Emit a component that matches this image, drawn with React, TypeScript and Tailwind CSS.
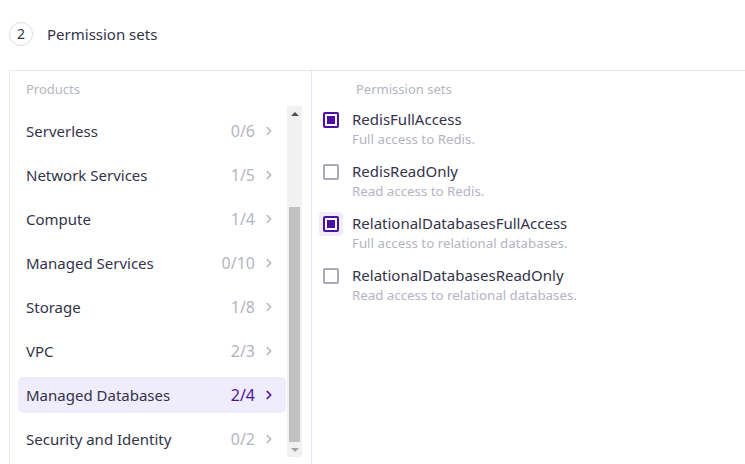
import { ChevronRight } from "lucide-react";

const products = [
  { name: "Serverless", count: "0/6" },
  { name: "Network Services", count: "1/5" },
  { name: "Compute", count: "1/4" },
  { name: "Managed Services", count: "0/10" },
  { name: "Storage", count: "1/8" },
  { name: "VPC", count: "2/3" },
  { name: "Managed Databases", count: "2/4", active: true },
  { name: "Security and Identity", count: "0/2" },
];

const sets = [
  { name: "RedisFullAccess", desc: "Full access to Redis.", checked: true },
  { name: "RedisReadOnly", desc: "Read access to Redis." },
  {
    name: "RelationalDatabasesFullAccess",
    desc: "Full access to relational databases.",
    checked: true,
    focused: true,
  },
  { name: "RelationalDatabasesReadOnly", desc: "Read access to relational databases." },
];

function Checkbox({ checked, focused }: { checked?: boolean; focused?: boolean }) {
  return (
    <div
      className={`flex h-6 w-6 shrink-0 items-center justify-center rounded-[4px] ${
        focused ? "bg-[#efecfb]" : ""
      }`}
    >
      <div
        className={`flex h-4 w-4 items-center justify-center rounded-[2px] border-2 ${
          checked ? "border-[#4f0f9e]" : "border-[#a9a9b8]"
        } bg-white`}
      >
        {checked && <div className="h-2 w-2 bg-[#4f0f9e]" />}
      </div>
    </div>
  );
}

export default function App() {
  return (
    <div className="h-[464px] overflow-hidden bg-white pl-[9px] font-['Noto_Sans',sans-serif] text-[#33334a]">
      <div className="flex h-[70px] items-center gap-[14px] pb-[2px]">
        <div className="flex h-6 w-6 items-center justify-center rounded-full border border-[#dcdce6] text-[14px] leading-none">
          2
        </div>
        <span className="text-[15px]">Permission sets</span>
      </div>
      <div className="flex h-[420px] border-l border-t border-[#e6e4f0]">
        <div className="flex w-[302px] shrink-0 flex-col border-r border-[#e6e4f0]">
          <div className="px-4 pt-[8px] text-[13px] leading-[20px] text-[#b4b4c4]">Products</div>
          <div className="mt-[7px] flex flex-1">
            <div className="flex flex-1 flex-col gap-2 pl-2 pt-[7px]">
              {products.map((p) => (
                <div
                  key={p.name}
                  className={`flex h-9 items-center rounded-[5px] pl-2 pr-[10px] text-[15px] ${
                    p.active ? "bg-[#efecfb]" : ""
                  }`}
                >
                  <span className="flex-1">{p.name}</span>
                  <span className={`text-[16px] ${p.active ? "text-[#52119e]" : "text-[#b4b4c4]"}`}>
                    {p.count}
                  </span>
                  <ChevronRight
                    size={14}
                    strokeWidth={p.active ? 3 : 2.5}
                    className={`ml-[7px] ${p.active ? "text-[#52119e]" : "text-[#b4b4c4]"}`}
                  />
                </div>
              ))}
            </div>
            <div className="ml-[1px] mr-[9px] flex h-[351px] w-[15px] flex-col items-center bg-[#f1f1f1]">
              <div className="flex h-[15px] w-full items-center justify-center">
                <div className="h-0 w-0 border-x-[4px] border-b-[4px] border-x-transparent border-b-[#505050]" />
              </div>
              <div className="mt-[86px] h-[235px] w-[11px] bg-[#c1c1c1]" />
              <div className="flex flex-1 items-center justify-center">
                <div className="h-0 w-0 border-x-[4px] border-t-[4px] border-x-transparent border-t-[#a3a3a3]" />
              </div>
            </div>
          </div>
        </div>
        <div className="flex-1 pl-[7px]">
          <div className="pl-[37px] pt-[8px] text-[13px] leading-[20px] text-[#b4b4c4]">Permission sets</div>
          <div className="mt-[9px] flex flex-col gap-[12px]">
            {sets.map((s) => (
              <div key={s.name} className="flex gap-[9px]">
                <Checkbox checked={s.checked} focused={s.focused} />
                <div className="flex flex-col">
                  <span className="text-[15px] leading-[22px]">{s.name}</span>
                  <span className="text-[13.3px] leading-[18px] text-[#b4b4c4]">{s.desc}</span>
                </div>
              </div>
            ))}
          </div>
        </div>
      </div>
    </div>
  );
}
